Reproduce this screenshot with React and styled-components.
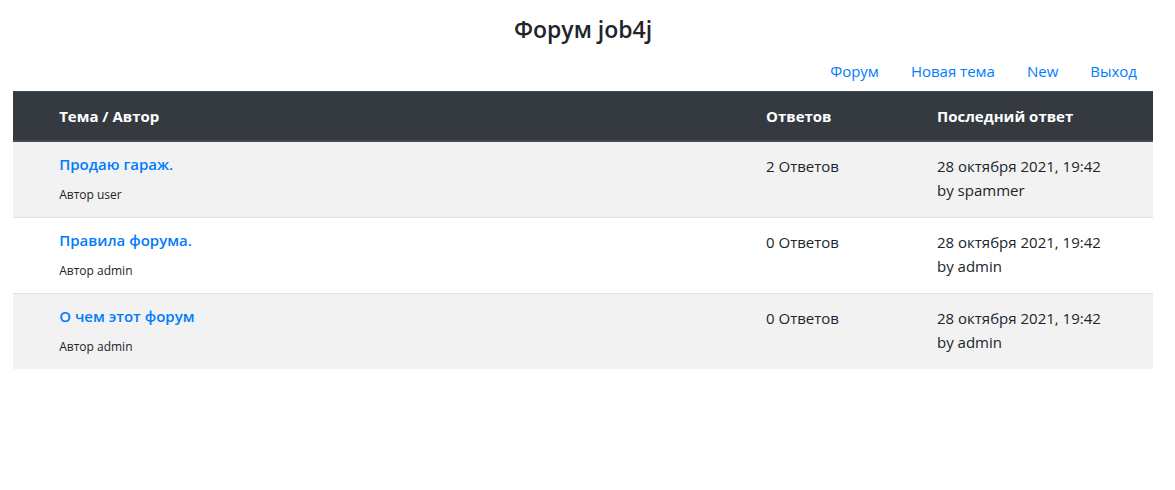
import React from 'react';
import styled, { createGlobalStyle } from 'styled-components';

const GlobalStyle = createGlobalStyle`
  *, *::before, *::after { box-sizing: border-box; }
  body {
    margin: 0;
    background: #fff;
    color: #212529;
    font-family: "Segoe UI", "Open Sans", "Noto Sans", sans-serif;
    font-size: 15px;
    line-height: 24px;
  }
`;

const Page = styled.main`
  padding: 15px 22px 15px 13px;
`;

const Title = styled.h1`
  margin: 0 0 8px;
  font-size: 23px;
  font-weight: 600;
  line-height: 28px;
  text-align: center;
`;

const Nav = styled.nav`
  display: flex;
  justify-content: flex-end;
`;

const NavLink = styled.a`
  padding: 8px 16px;
  color: #007bff;
  text-decoration: none;
  &:hover { color: #0056b3; }
`;

const Table = styled.table`
  width: 100%;
  table-layout: fixed;
  border-collapse: separate;
  border-spacing: 0;
`;

const Col = styled.col`
  width: ${({ $width }) => $width};
`;

const HeadCell = styled.th`
  padding: 12px;
  border-top: 1px solid #454d55;
  border-bottom: 2px solid #454d55;
  background: #343a40;
  color: #fff;
  font-weight: 700;
  line-height: 24px;
  text-align: left;
`;

const Cell = styled.td`
  height: 76px;
  padding: 12px;
  border-top: 1px solid #dee2e6;
  vertical-align: top;
`;

const Row = styled.tr`
  background: #fff;
  &:nth-child(odd) { background: #f2f2f2; }
  &:first-child ${Cell} {
    height: 75px;
    border-top: 0;
  }
`;

const Topic = styled.a`
  display: block;
  color: #007bff;
  font-weight: 600;
  line-height: 20px;
  text-decoration: none;
  &:hover { color: #0056b3; }
`;

const Author = styled.small`
  display: block;
  margin-top: 12px;
  font-size: 12px;
  line-height: 18px;
`;

const Reply = styled.div`
  line-height: 24px;
`;

const links = ['Форум', 'Новая тема', 'New', 'Выход'];

const topics = [
  { title: 'Продаю гараж.', author: 'user', replies: 2, last: 'spammer' },
  { title: 'Правила форума.', author: 'admin', replies: 0, last: 'admin' },
  { title: 'О чем этот форум', author: 'admin', replies: 0, last: 'admin' },
];

export default function App() {
  return (
    <>
      <GlobalStyle />
      <Page>
        <Title>Форум job4j</Title>
        <Nav>
          {links.map((label) => (
            <NavLink key={label} href="#">{label}</NavLink>
          ))}
        </Nav>
        <Table>
          <colgroup>
            <Col $width="3%" />
            <Col $width="62%" />
            <Col $width="15%" />
            <Col $width="20%" />
          </colgroup>
          <thead>
            <tr>
              <HeadCell as="td" />
              <HeadCell scope="col">Тема / Автор</HeadCell>
              <HeadCell scope="col">Ответов</HeadCell>
              <HeadCell scope="col">Последний ответ</HeadCell>
            </tr>
          </thead>
          <tbody>
            {topics.map((topic) => (
              <Row key={topic.title}>
                <Cell />
                <Cell>
                  <Topic href="#">{topic.title}</Topic>
                  <Author>Автор {topic.author}</Author>
                </Cell>
                <Cell>{topic.replies} Ответов</Cell>
                <Cell>
                  <Reply>28 октября 2021, 19:42</Reply>
                  <Reply>by {topic.last}</Reply>
                </Cell>
              </Row>
            ))}
          </tbody>
        </Table>
      </Page>
    </>
  );
}
